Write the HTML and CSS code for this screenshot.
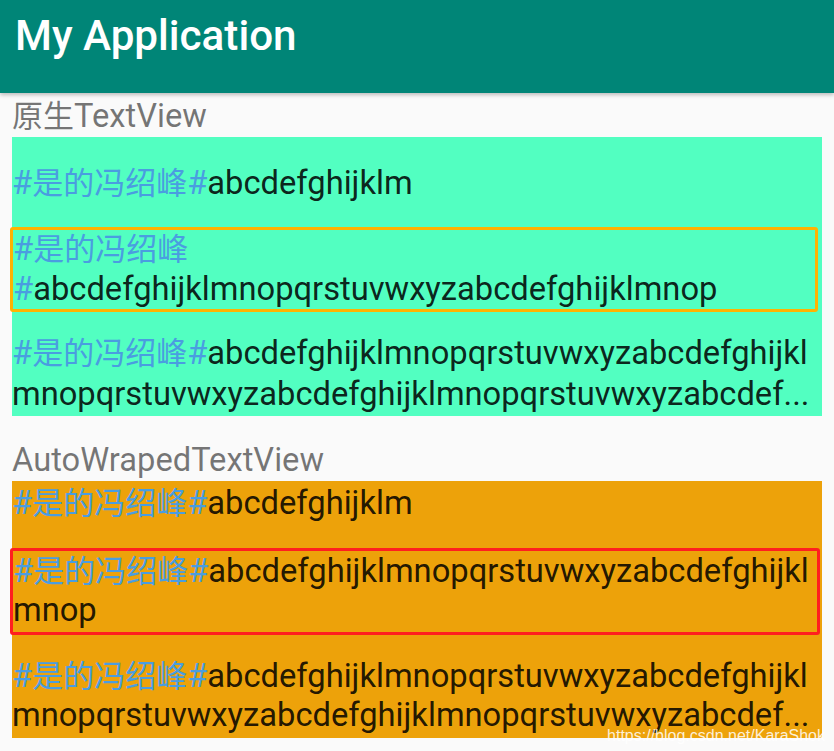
FILE: index.html
```html
<!DOCTYPE html>
<html lang="zh">
<head>
<meta charset="utf-8">
<title>My Application</title>
<link rel="stylesheet" href="styles.css">
</head>
<body>
<header class="appbar"><h1 class="title">My Application</h1></header>
<main class="content">
  <div class="label label-first"><span class="cjk">原生</span>TextView</div>
  <section class="block block-green">
    <p class="tv tv-first"><span class="tag">#<span class="cjk">是的冯绍峰</span>#</span>abcdefghijklm</p>
    <p class="tv tv-box tv-box-orange"><span class="line"><span class="tag">#<span class="cjk">是的冯绍峰</span></span></span><span class="line"><span class="tag">#</span>abcdefghijklmnopqrstuvwxyzabcdefghijklmnop</span></p>
    <p class="tv tv-last"><span class="line"><span class="tag">#<span class="cjk">是的冯绍峰</span>#</span>abcdefghijklmnopqrstuvwxyzabcdefghijkl</span><span class="line">mnopqrstuvwxyzabcdefghijklmnopqrstuvwxyzabcdef...</span></p>
  </section>
  <div class="label label-second">AutoWrapedTextView</div>
  <section class="block block-orange">
    <p class="tv tv-first"><span class="tag">#<span class="cjk">是的冯绍峰</span>#</span>abcdefghijklm</p>
    <p class="tv tv-box tv-box-red"><span class="line"><span class="tag">#<span class="cjk">是的冯绍峰</span>#</span>abcdefghijklmnopqrstuvwxyzabcdefghijkl</span><span class="line">mnop</span></p>
    <p class="tv tv-last"><span class="line"><span class="tag">#<span class="cjk">是的冯绍峰</span>#</span>abcdefghijklmnopqrstuvwxyzabcdefghijkl</span><span class="line">mnopqrstuvwxyzabcdefghijklmnopqrstuvwxyzabcdef...</span></p>
  </section>
</main>
<div class="watermark">https://blog.csdn.net/KaraShok</div>
</body>
</html>
```
FILE: styles.css
```css
html, body {
  margin: 0;
  padding: 0;
}
body {
  background: #fafafa;
  font-family: Roboto, "Noto Sans CJK SC", sans-serif;
  width: 834px;
  height: 751px;
  overflow: hidden;
  position: relative;
}
.appbar {
  background: #008577;
  height: 93px;
  box-sizing: border-box;
  padding: 15px 0 0 15px;
  box-shadow: 0 2px 4px rgba(0,0,0,0.25);
  position: relative;
  z-index: 1;
}
.title {
  margin: 0;
  color: #fff;
  font-weight: 500;
  font-size: 42.2px;
  line-height: 42px;
}
.content {
  padding: 0 12px;
}
.cjk {
  font-size: 31px;
}
.label {
  font-size: 32.7px;
  line-height: 41px;
  color: rgba(0,0,0,0.54);
}
.label-first { padding-top: 3px; }
.label-second { padding-top: 24px; }
.block {
  font-size: 32.7px;
  color: rgba(0,0,0,0.87);
}
.tv {
  margin: 0;
  white-space: nowrap;
}
.line { display: block; }
.tag { color: #4a9de0; }
.block-green {
  background: #52ffc1;
  padding: 26px 0 1px;
  line-height: 41px;
}
.block-green .tv-box {
  margin-top: 23px;
  line-height: 39.5px;
}
.block-green .tv-last { margin-top: 21px; }
.tv-box {
  border: 3px solid;
  border-radius: 3px;
  margin-left: -2px;
}
.tv-box-orange {
  border-color: #ffb300;
  width: 802px;
}
.block-orange {
  background: #eda20a;
  padding: 3px 0 4px;
  line-height: 38px;
}
.block-orange .tv-box {
  margin-top: 25px;
  padding: 1px 0 3px;
}
.tv-box-red {
  border-color: #ff1f1f;
  width: 804px;
}
.block-orange .tv-last { margin-top: 22px; }
.watermark {
  position: absolute;
  right: 9px;
  bottom: 6px;
  font-family: "Liberation Sans", sans-serif;
  font-size: 16px;
  line-height: 18px;
  color: rgba(255,255,255,0.85);
}
```
